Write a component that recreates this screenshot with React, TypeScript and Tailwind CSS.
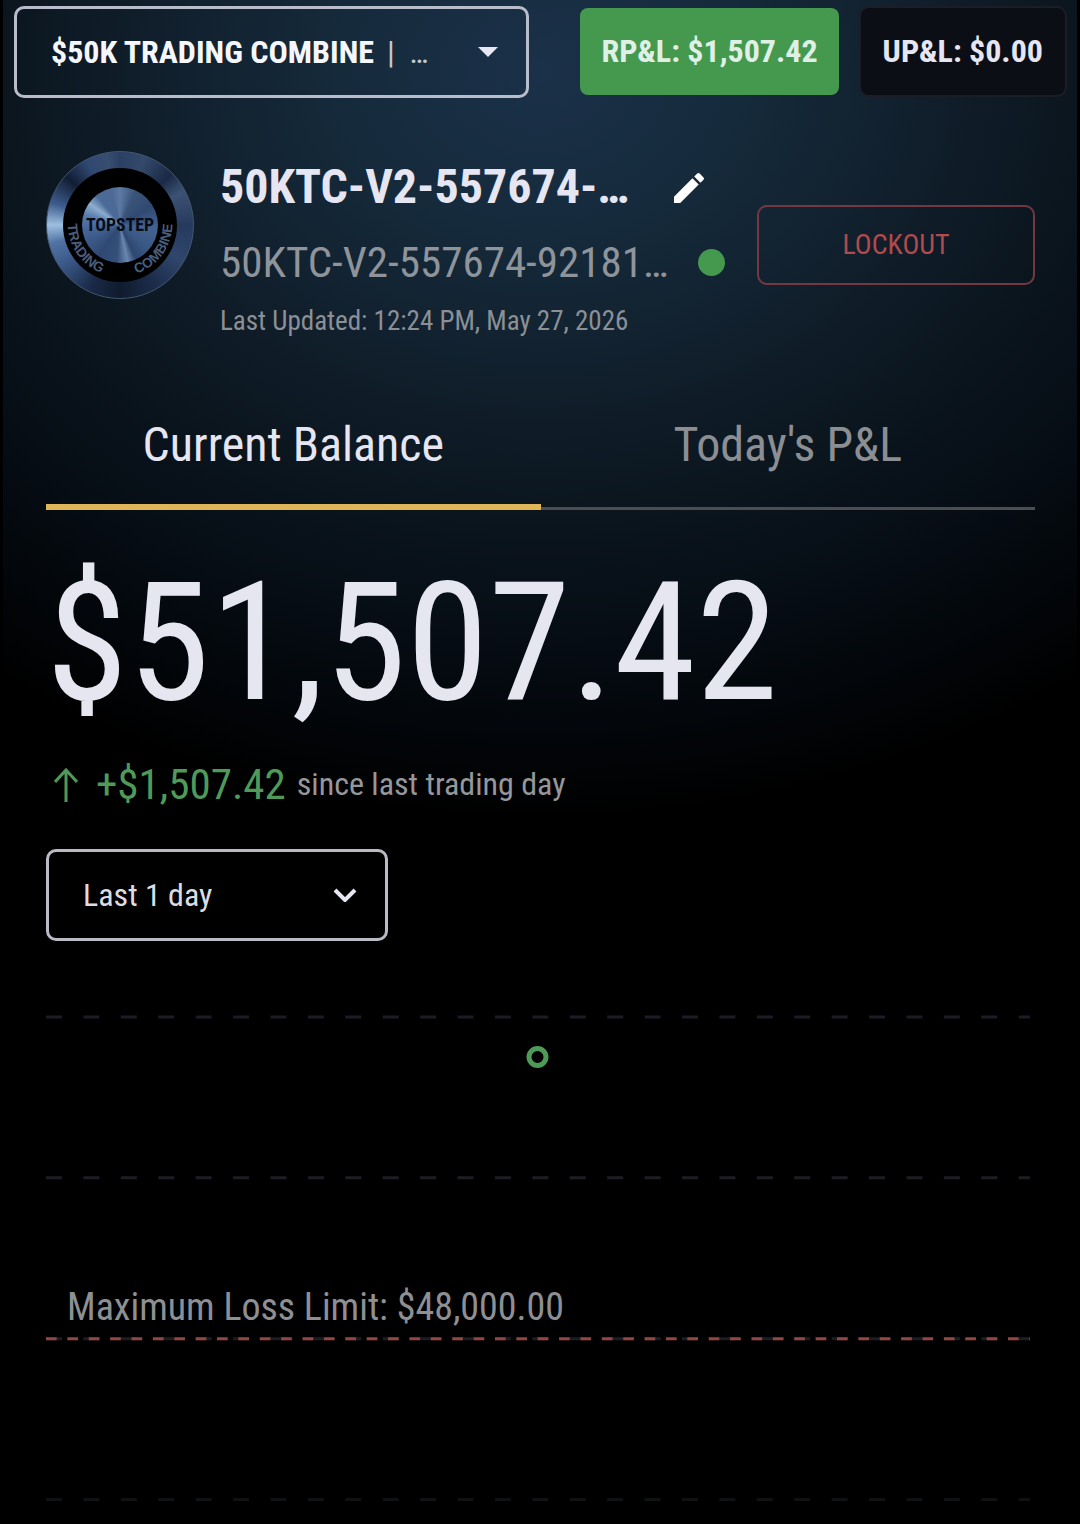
import { useState } from 'react';
import { MdEdit } from 'react-icons/md';

const gridLines = [
  { y: 7, color: '#1c1c24' },
  { y: 168, color: '#1c1e24' },
  { y: 329, color: '#1c1e24' },
  { y: 490, color: '#0f1113' },
];

const tabs = ['Current Balance', "Today's P&L"];

function CombineBadge() {
  return (
    <div className="relative size-[148px] shrink-0 rounded-full border border-[#43566e] bg-[conic-gradient(from_0deg,#2a4064,#34496b_20deg,#1a2a46_45deg,#3c5274_62deg,#263a5e_90deg,#30466c_120deg,#1c2c4a_150deg,#101b2e_180deg,#1a2946_205deg,#3a5989_235deg,#5073a4_255deg,#9dbfe0_270deg,#3d5c8e_288deg,#121d33_312deg,#2f4872_332deg,#384e70_350deg,#2a4064)]">
      <div className="flex size-full items-center justify-center">
        <div className="flex size-[114px] items-center justify-center rounded-full bg-black">
          <div className="size-[76px] rounded-full bg-[conic-gradient(from_0deg,#5c7aa4,#3a5479_25deg,#2f4972_60deg,#44628f_95deg,#3a5885_130deg,#2e4770_155deg,#6a87b0_168deg,#34507b_185deg,#2f4973_215deg,#446496_260deg,#557aac_285deg,#8eaccd_305deg,#4b6b98_322deg,#4b6994_345deg,#5c7aa4)]" />
        </div>
      </div>
      <svg viewBox="0 0 148 148" className="absolute inset-0 size-full" aria-label="Topstep Trading Combine">
        <path id="badge-arc" d="M21 73 A53 53 0 0 0 127 73" fill="none" />
        <text
          x="74"
          y="80"
          textAnchor="middle"
          fontSize="18"
          className="fill-[#070c18] font-['Roboto_Condensed',Roboto,sans-serif] font-bold"
        >
          TOPSTEP
        </text>
        <g fontSize="14" className="fill-[#4a5d7b] font-['Liberation_Sans',sans-serif] font-bold">
          <text>
            <textPath href="#badge-arc">TRADING</textPath>
          </text>
          <text textAnchor="end">
            <textPath href="#badge-arc" startOffset="100%">COMBINE</textPath>
          </text>
        </g>
      </svg>
    </div>
  );
}

function TopBar() {
  return (
    <header className="flex h-[107px] items-start justify-between pt-[6px] pr-[10px] pl-[11px]">
      <div className="flex h-[92px] w-[515px] items-center rounded-[10px] border-[3px] border-[#b9bccb] pr-[28px] pl-[34px]">
        <select
          aria-label="Account"
          className="appearance-none bg-transparent text-[32px] leading-[40px] font-bold text-[#f5f7fd] outline-none"
        >
          <option>$50K TRADING COMBINE</option>
        </select>
        <span className="ml-[12px] text-[32px] leading-[40px] text-[#c3c9d4]">|&nbsp; …</span>
        <svg viewBox="0 0 20 10" className="ml-auto h-[10px] w-[20px]" aria-hidden="true">
          <path d="M0 0 H20 L10 10 Z" fill="#e6e7f2" />
        </svg>
      </div>
      <div className="flex gap-[20px]">
        <div className="mt-[2px] flex h-[87px] items-center rounded-[8px] bg-[#45994e] px-[21px] pb-[2px] text-[32px] leading-[40px] font-bold text-[#dff0e6]">
          RP&amp;L: $1,507.42
        </div>
        <div className="flex h-[91px] items-center rounded-[10px] border-2 border-[#1b1d27] bg-[#0b0e15] px-[22px] pb-[2px] text-[32px] leading-[40px] font-bold text-[#e5e6f1]">
          UP&amp;L: $0.00
        </div>
      </div>
    </header>
  );
}

function AccountSummary() {
  return (
    <section className="flex items-start">
      <div className="mt-[10px]">
        <CombineBadge />
      </div>
      <div className="ml-[26px] min-w-0 flex-1">
        <div className="mt-[16px] flex items-center">
          <h1 className="text-[48px] leading-[60px] font-bold whitespace-nowrap text-[#e5e6f2]">50KTC-V2-557674-…</h1>
          <button aria-label="Edit account name" className="ml-[40px] pt-[2px] text-white">
            <MdEdit className="size-[40px]" />
          </button>
        </div>
        <div className="mt-[15px] flex items-center">
          <span className="text-[43px] leading-[60px] whitespace-nowrap text-[#8f949b]">50KTC-V2-557674-92181…</span>
          <span className="ml-[30px] size-[27px] shrink-0 rounded-full bg-[#45994e]" />
        </div>
        <p className="mt-[13px] text-[27px] leading-[32px] whitespace-nowrap text-[#8b9097]">
          Last Updated: 12:24 PM, May 27, 2026
        </p>
      </div>
      <button className="mt-[64px] h-[80px] w-[278px] shrink-0 rounded-[10px] border-2 border-[#743940] text-[28px] leading-[36px] text-[#b14a4b]">
        LOCKOUT
      </button>
    </section>
  );
}

function BalanceChart() {
  return (
    <svg viewBox="0 0 990 514" className="mt-[69px] block w-full" role="img" aria-label="Balance over the last day">
      {gridLines.map((line) => (
        <line
          key={line.y}
          x1="0"
          x2="985"
          y1={line.y}
          y2={line.y}
          stroke={line.color}
          strokeWidth="3"
          strokeDasharray="16 21.45"
        />
      ))}
      <circle cx="492" cy="47" r="8.5" fill="none" stroke="#4f9a59" strokeWidth="5" />
      <text x="21" y="310" fontSize="38" className="fill-[#8e8f93]">
        Maximum Loss Limit: $48,000.00
      </text>
      <line x1="0" x2="985" y1="329" y2="329" stroke="#924744" strokeWidth="3" strokeDasharray="10.7 10.7" />
    </svg>
  );
}

export default function App() {
  const [activeTab, setActiveTab] = useState(tabs[0]);

  return (
    <div className="min-h-screen overflow-hidden bg-black px-[3px] font-['Roboto_Condensed',Roboto,sans-serif]">
      <div className="bg-[radial-gradient(ellipse_920px_750px_at_50%_70px,#1b3149_0%,#152a3b_22%,#111f2c_42%,#0b161f_58%,#060d15_75%,#000_100%)]">
        <TopBar />
        <main className="pt-[34px] pr-[42px] pl-[43px]">
          <AccountSummary />

          <div role="tablist" className="mt-[61px] flex">
            {tabs.map((tab) => (
              <button
                key={tab}
                role="tab"
                aria-selected={activeTab === tab}
                onClick={() => setActiveTab(tab)}
                className={`flex h-[112px] flex-1 flex-col items-center justify-between text-[48px] leading-[60px] ${
                  activeTab === tab ? 'text-[#e5e6f2]' : 'text-[#8b8e93]'
                }`}
              >
                <span className="mt-[17px]">{tab}</span>
                <span className="flex h-[6px] w-full items-end">
                  <span className={`w-full ${activeTab === tab ? 'h-[6px] bg-[#e0b558]' : 'h-[3px] bg-[#4b4d51]'}`} />
                </span>
              </button>
            ))}
          </div>

          <p className="mt-[33px] text-[166px] leading-[200px] whitespace-nowrap text-[#e5e6f0]">$51,507.42</p>

          <p className="mt-[15px] flex items-center leading-[52px]">
            <svg viewBox="0 0 24 34" className="mt-[2px] ml-[8px] h-[34px] w-[24px]" aria-hidden="true">
              <path d="M12 34 V3 M1 14 L12 2 L23 14" fill="none" stroke="#4f9a59" strokeWidth="3" />
            </svg>
            <span className="ml-[18px] text-[43px] text-[#4f9a59]">+$1,507.42</span>
            <span className="ml-[11px] text-[32px] text-[#96979a]">since last trading day</span>
          </p>

          <div className="mt-[39px] flex h-[92px] w-[342px] items-center rounded-[10px] border-[3px] border-[#b9bac3] pl-[34px]">
            <select
              aria-label="Period"
              className="w-full appearance-none bg-transparent text-[32px] leading-[40px] text-[#dcdde3] outline-none"
            >
              <option>Last 1 day</option>
            </select>
            <svg viewBox="0 0 24 14" className="mr-[28px] h-[14px] w-[24px] shrink-0" aria-hidden="true">
              <path d="M2 2 L12 12 L22 2" fill="none" stroke="#e6e7f2" strokeWidth="4" />
            </svg>
          </div>

          <BalanceChart />
        </main>
      </div>
    </div>
  );
}
